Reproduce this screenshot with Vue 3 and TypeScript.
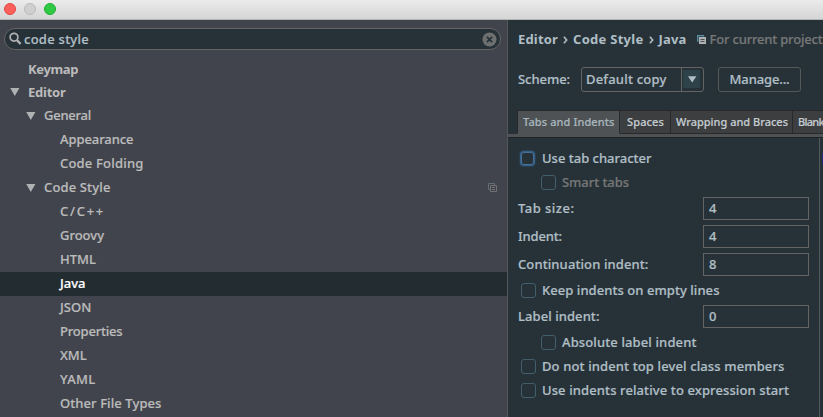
<script setup lang="ts">
import { ref } from 'vue'

interface TreeNode {
  label: string
  depth: number
  width: number
  group?: boolean
  strong?: boolean
  shared?: boolean
}

interface Option {
  label: string
  width: number
  kind: 'check' | 'field'
  value?: string
  nested?: boolean
  disabled?: boolean
  focused?: boolean
}

const query = ref('code style')
const selected = ref('Java')

const tree: TreeNode[] = [
  { label: 'Keymap', depth: 0, width: 50, strong: true },
  { label: 'Editor', depth: 0, width: 37.5, group: true, strong: true },
  { label: 'General', depth: 1, width: 47, group: true },
  { label: 'Appearance', depth: 2, width: 73.5 },
  { label: 'Code Folding', depth: 2, width: 83.5 },
  { label: 'Code Style', depth: 1, width: 66.5, group: true, shared: true },
  { label: 'C/C++', depth: 2, width: 45 },
  { label: 'Groovy', depth: 2, width: 44 },
  { label: 'HTML', depth: 2, width: 36 },
  { label: 'Java', depth: 2, width: 25.5 },
  { label: 'JSON', depth: 2, width: 31.5 },
  { label: 'Properties', depth: 2, width: 62.5 },
  { label: 'XML', depth: 2, width: 26.5 },
  { label: 'YAML', depth: 2, width: 35.5 },
  { label: 'Other File Types', depth: 2, width: 101.5 },
]

const tabs = [
  { label: 'Tabs and Indents', width: 91.5 },
  { label: 'Spaces', width: 37 },
  { label: 'Wrapping and Braces', width: 112 },
  { label: 'Blank Lines', width: 52 },
]

const options: Option[] = [
  { label: 'Use tab character', width: 109.5, kind: 'check', focused: true },
  { label: 'Smart tabs', width: 67, kind: 'check', nested: true, disabled: true },
  { label: 'Tab size:', width: 56.5, kind: 'field', value: '4' },
  { label: 'Indent:', width: 44, kind: 'field', value: '4' },
  { label: 'Continuation indent:', width: 130.5, kind: 'field', value: '8' },
  { label: 'Keep indents on empty lines', width: 177.5, kind: 'check' },
  { label: 'Label indent:', width: 81.5, kind: 'field', value: '0' },
  { label: 'Absolute label indent', width: 134.5, kind: 'check', nested: true },
  { label: 'Do not indent top level class members', width: 242.5, kind: 'check' },
  { label: 'Use indents relative to expression start', width: 247, kind: 'check' },
]

const pen = document.createElement('canvas').getContext('2d')!
function track(text: string, width: number, weight = 500, size = 13) {
  pen.font = `${weight} ${size}px "Noto Sans"`
  return { letterSpacing: `${((width - pen.measureText(text).width) / text.length).toFixed(3)}px` }
}
</script>

<template>
  <div class="window">
    <header class="titlebar">
      <span class="light close"></span>
      <span class="light minimise"></span>
      <span class="light zoom"></span>
    </header>

    <div class="content">
      <aside class="sidebar">
        <div class="search">
          <svg class="lens" width="13" height="14" viewBox="0 0 13 14">
            <circle cx="5" cy="5.2" r="3.9" />
            <path d="M7.9 8.2 L11.6 12" />
          </svg>
          <span class="query" :style="track(query, 65)">{{ query }}</span>
          <svg class="clear" width="15" height="15" viewBox="0 0 15 15">
            <circle cx="7.5" cy="7.5" r="7" />
            <path d="M4.9 4.9 L10.1 10.1 M10.1 4.9 L4.9 10.1" />
          </svg>
        </div>

        <ul class="tree">
          <li
            v-for="node in tree"
            :key="node.label"
            :class="['node', `depth-${node.depth}`, { strong: node.strong, selected: node.label === selected }]"
            @click="selected = node.label"
          >
            <span class="twisty">
              <svg v-if="node.group" width="10" height="8" viewBox="0 0 10 8"><path d="M0.2 0 H9.4 L4.8 8 Z" /></svg>
            </span>
            <span class="name" :style="track(node.label, node.width, node.strong ? 700 : 500)">{{ node.label }}</span>
            <svg v-if="node.shared" class="shared" width="10" height="10" viewBox="0 0 10 10">
              <path class="back" d="M2 6.5 H0.5 V0.5 H6.5 V2" />
              <path d="M2.5 2.5 H8.5 V8.5 H2.5 Z M4 4.5 H7 M4 6.5 H7" />
            </svg>
          </li>
        </ul>
      </aside>

      <main class="pane">
        <div class="crumbs">
          <span class="crumb" :style="track('Editor', 40, 700)">Editor</span>
          <svg class="chevron" width="5" height="8" viewBox="0 0 5 8"><path d="M0.9 0.7 L3.7 4 L0.9 7.3" /></svg>
          <span class="crumb" :style="track('Code Style', 70.5, 700)">Code Style</span>
          <svg class="chevron" width="5" height="8" viewBox="0 0 5 8"><path d="M0.9 0.7 L3.7 4 L0.9 7.3" /></svg>
          <span class="crumb" :style="track('Java', 28, 700)">Java</span>
          <svg class="scope-icon" width="9" height="9" viewBox="0 0 9 9">
            <path class="back" d="M1.5 6 H0.7 V0.7 H6.5 V1.5" />
            <path class="sheet" d="M2 2 H9 V9 H2 Z" />
            <path class="rule" d="M3.5 4.5 H7.5 M3.5 6.5 H7.5" />
          </svg>
          <span class="scope" :style="track('For current project', 113)">For current project</span>
        </div>

        <div class="scheme">
          <span class="caption" :style="track('Scheme:', 52)">Scheme:</span>
          <div class="select">
            <span class="choice" :style="track('Default copy', 80.5)">Default copy</span>
            <span class="drop"><svg width="9" height="7" viewBox="0 0 9 7"><path d="M0 0.3 H8.4 L4.2 6.6 Z" /></svg></span>
          </div>
          <button class="manage"><span :style="track('Manage...', 60)">Manage...</span></button>
        </div>

        <nav class="tabs">
          <span v-for="(tab, i) in tabs" :key="tab.label" :class="['tab', { active: i === 0 }]">
            <span :style="track(tab.label, tab.width, 500, 11)">{{ tab.label }}</span>
          </span>
        </nav>

        <div class="body">
          <section class="form">
            <div
              v-for="option in options"
              :key="option.label"
              :class="['row', option.kind, { nested: option.nested, disabled: option.disabled, focused: option.focused }]"
            >
              <span v-if="option.kind === 'check'" class="box"></span>
              <span class="text" :style="track(option.label, option.width)">{{ option.label }}</span>
              <span v-if="option.kind === 'field'" class="input">{{ option.value }}</span>
            </div>
          </section>
          <div class="preview"><span class="keyword"></span></div>
        </div>
      </main>
    </div>
  </div>
</template>

<style>
body {
  background: #263238;
  overflow: hidden;
}
</style>

<style scoped>
* {
  box-sizing: border-box;
}
.window {
  width: 823px;
  height: 417px;
  display: flex;
  flex-direction: column;
  overflow: hidden;
  font: 500 13px/24px "Noto Sans", sans-serif;
  color: #b0bec5;
  white-space: nowrap;
  -webkit-text-stroke: 0.2px;
}
svg {
  display: block;
  flex: none;
}
.titlebar {
  height: 20px;
  flex: none;
  display: flex;
  gap: 8px;
  padding: 3px 4px;
  background: linear-gradient(#ebebeb, #d5d5d5);
  border-bottom: 1px solid #b0b8b2;
}
.light {
  width: 12px;
  height: 12px;
  border-radius: 50%;
  border: 1px solid;
}
.close { background: #fc605b; border-color: #e24640; }
.minimise { background: #cfcfcf; border-color: #b9b9b9; }
.zoom { background: #2fc943; border-color: #1fad30; }

.content {
  flex: 1;
  min-height: 0;
  display: flex;
}
.sidebar {
  width: 508px;
  flex: none;
  background: #41444c;
  border-right: 1px solid #555758;
  color: #bbbbbb;
}
.search {
  height: 22px;
  margin: 8px 6px 0 4px;
  padding: 0 3px 0 4px;
  display: flex;
  align-items: center;
  border: 1px solid #646464;
  border-radius: 11px;
  background: #263238;
  color: #b0bec5;
}
.lens {
  fill: none;
  stroke: #afb1b3;
  stroke-width: 1.7;
}
.lens path { stroke-width: 2.4; }
.query {
  flex: 1;
  margin-left: 2px;
  line-height: 20px;
}
.clear { fill: #6e7070; }
.clear path {
  stroke: #263238;
  stroke-width: 1.8;
}
.tree {
  list-style: none;
  margin: 0;
  padding: 7px 0 0;
}
.node {
  height: 24px;
  display: flex;
  align-items: center;
  line-height: 24px;
}
.node:first-child { height: 23px; }
.node:not(.strong) .name { padding-bottom: 2px; }
.strong { font-weight: 700; -webkit-text-stroke: 0; }
.depth-0 { padding-left: 10px; }
.depth-1 { padding-left: 26px; }
.depth-2 { padding-left: 42px; }
.selected {
  background: #232d31;
  color: #ffffff;
}
.twisty {
  width: 18px;
  flex: none;
  fill: #afb1b3;
}
.name { flex: 1; }
.shared {
  margin-right: 9px;
  fill: none;
  stroke: #707273;
}
.shared .back { stroke: #626d75; }

.pane {
  flex: 1;
  min-width: 0;
  display: flex;
  flex-direction: column;
  background: #263238;
  overflow: hidden;
}
.crumbs {
  height: 24px;
  flex: none;
  margin: 7px 0 0 10px;
  display: flex;
  align-items: center;
  font-weight: 700;
  -webkit-text-stroke: 0;
}
.crumb { flex: none; }
.chevron {
  margin: 2px 5px 0 5px;
  fill: none;
  stroke: #b0bec5;
  stroke-width: 1.6;
}
.scope-icon { margin: 1px 4px 0 10px; }
.scope-icon .back {
  fill: none;
  stroke: #5a93a8;
  stroke-width: 1.3;
}
.scope-icon .sheet { fill: #afb1b3; }
.scope-icon .rule { stroke: #4a5257; }
.scope {
  font-weight: 500;
  color: #777777;
  -webkit-text-stroke: 0.2px;
}
.scheme {
  height: 25px;
  flex: none;
  margin: 16px 0 0 10px;
  display: flex;
  align-items: center;
}
.caption {
  width: 63px;
  padding-bottom: 1px;
}
.select {
  width: 123px;
  height: 25px;
  display: flex;
  align-items: stretch;
  border: 1px solid #646464;
  border-radius: 3px;
  line-height: 22px;
}
.choice {
  width: 99px;
  padding-left: 4px;
}
.drop {
  flex: 1;
  display: flex;
  align-items: center;
  justify-content: center;
  border-left: 1px solid #646464;
  background: linear-gradient(#2e4249, #2e4249) no-repeat 1px 2px / 17px 18px;
  fill: #b0bec5;
}
.manage {
  width: 83px;
  height: 25px;
  margin-left: 14px;
  padding: 0 0 1px;
  border: 1px solid #56595a;
  border-radius: 3px;
  background: none;
  color: inherit;
  font: inherit;
  line-height: 22px;
}
.tabs {
  height: 28px;
  flex: none;
  margin-top: 18px;
  padding-left: 9px;
  display: flex;
  background: linear-gradient(#4e5254, #4e5254) no-repeat 0 24px / 100% 3px;
  border-bottom: 1px solid #1f2426;
}
.tab {
  height: 24px;
  flex: none;
  padding: 0 4px 0 5px;
  border: 1px solid #27292a;
  border-left: 0;
  background: #3c3e3f;
  font-size: 11px;
  line-height: 22px;
  color: #c3cbd0;
}
.tab:nth-child(2) {
  padding-left: 7px;
  padding-right: 6px;
}
.tab.active {
  width: 103px;
  background: #4e5254;
  color: #a7b5bc;
  border-left: 1px solid #27292a;
  border-bottom-color: #4e5254;
}
.body {
  flex: 1;
  min-height: 0;
  display: flex;
}
.form {
  width: 312px;
  flex: none;
  padding: 8px 10px 0;
  border-right: 1px solid #555758;
}
.preview {
  flex: 1;
  display: flex;
  justify-content: flex-end;
  padding-top: 15px;
}
.keyword {
  width: 1px;
  height: 11px;
  background: #232a7c;
}
.row {
  height: 24px;
  display: flex;
  align-items: center;
}
.field { height: 28px; }
.field .text {
  flex: none;
  width: 185px;
}
.input {
  width: 106px;
  height: 23px;
  padding-left: 5px;
  border: 1px solid #646464;
  line-height: 21px;
}
.box {
  width: 15px;
  height: 15px;
  margin: 0 6px 0 3px;
  border: 1px solid #435f6b;
  border-radius: 3px;
}
.nested .box { margin-left: 23px; }
.focused .box {
  width: 13px;
  height: 13px;
  margin: 0 8px 0 3px;
  border-color: #466f98;
  box-shadow: 0 0 0 1px #37608a, 0 0 2px 1px #37608a;
}
.disabled { color: #777777; }
</style>
